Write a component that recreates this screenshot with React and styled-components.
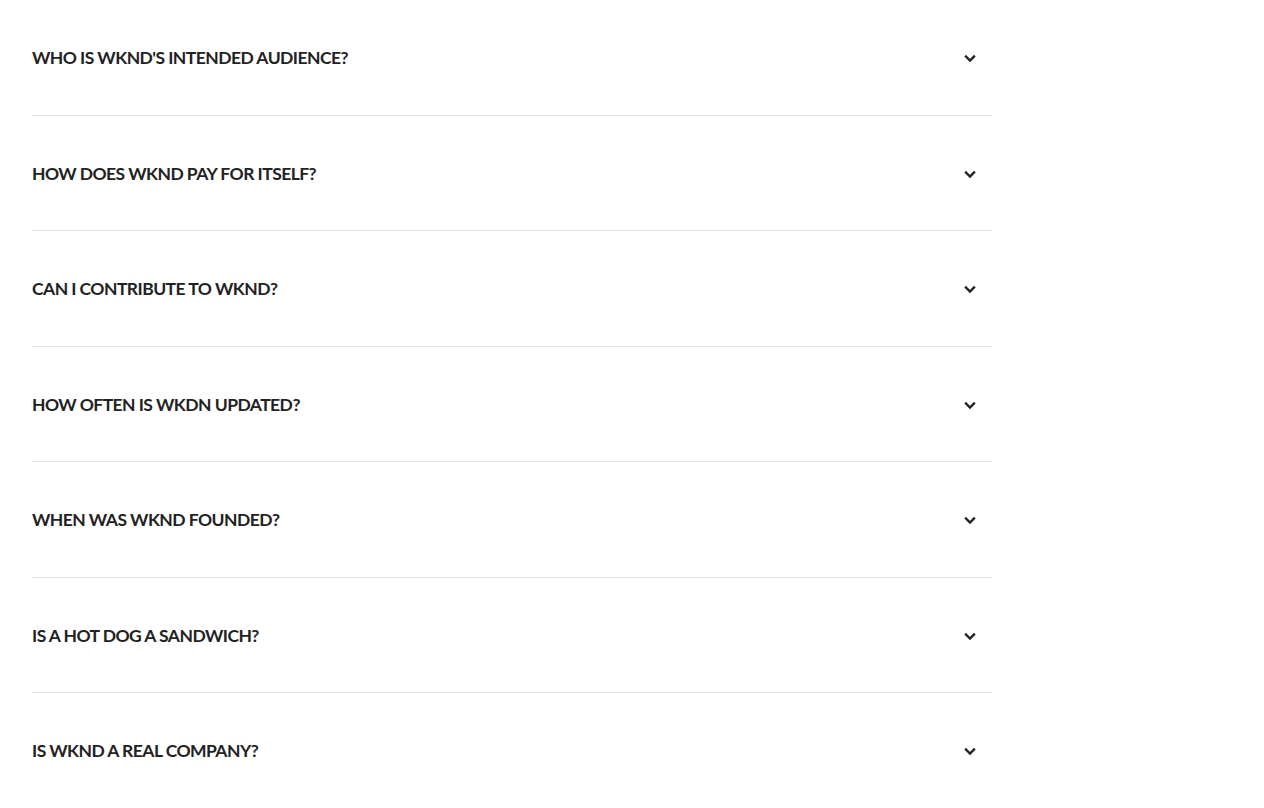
import React from 'react'
import styled, { createGlobalStyle } from 'styled-components'

const GlobalStyle = createGlobalStyle`
  body {
    margin: 0;
    background: #fff;
    font-family: Lato, "Noto Sans", sans-serif;
  }
`

const Page = styled.div`
  padding: 0 272px 0 32px;
`

const List = styled.div`
  display: flex;
  flex-direction: column;
`

const Item = styled.div`
  box-sizing: border-box;
  height: 115.5px;
  display: flex;
  align-items: center;
  justify-content: space-between;
  padding: 2px 10px 0 0;
  border-bottom: 1px solid ${({ $last }) => ($last ? 'transparent' : '#e1e1e1')};
  cursor: pointer;
`

const Question = styled.h3`
  margin: 0;
  font-size: 17.5px;
  line-height: 22px;
  letter-spacing: -0.55px;
  font-weight: 700;
  color: #222;
  text-transform: uppercase;
`

const Chevron = () => (
  <svg width="24" height="24" viewBox="0 0 24 24" fill="none" stroke="#222" strokeWidth="2.4" strokeLinecap="square">
    <path d="M8 10.5 12 14.5 16 10.5" />
  </svg>
)

const questions = [
  "Who is WKND's intended audience?",
  'How does WKND pay for itself?',
  'Can I contribute to WKND?',
  'How often is WKDN updated?',
  'When was WKND founded?',
  'Is a hot dog a sandwich?',
  'Is WKND a real company?',
]

export default function App() {
  return (
    <>
      <GlobalStyle />
      <Page>
        <List>
          {questions.map((q, i) => (
            <Item key={q} $last={i === questions.length - 1}>
              <Question>{q}</Question>
              <Chevron />
            </Item>
          ))}
        </List>
      </Page>
    </>
  )
}
